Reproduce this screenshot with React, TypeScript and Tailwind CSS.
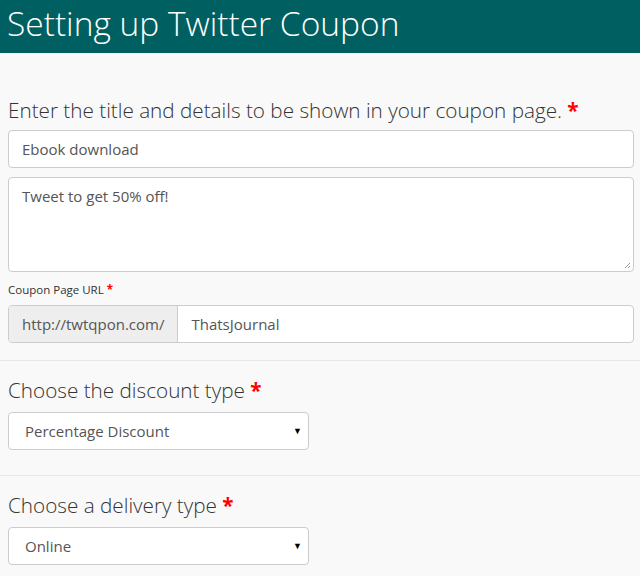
import React from 'react'

const font = { fontFamily: '"Open Sans", "Liberation Sans", sans-serif' }

function Star() {
  return <span className="text-[#ff0000] font-bold">*</span>
}

function FakeSelect({ value }: { value: string }) {
  return (
    <div className="flex h-[38px] w-[301px] items-center justify-between rounded border border-[#cccccc] bg-white pl-[16px] pr-[6px] text-[15px] text-[#555555]">
      <span>{value}</span>
      <span className="text-[9px] text-black">▼</span>
    </div>
  )
}

export default function App() {
  return (
    <div className="min-h-[576px] bg-[#f9f9f9]" style={font}>
      <div className="h-[53px] overflow-hidden bg-[#005f60] px-[7px] pt-[2px]">
        <h1 className="text-[33.5px] font-light leading-[42px] text-white">Setting up Twitter Coupon</h1>
      </div>
      <div className="pl-2 pr-[6px] pt-[42px]">
        <h2 className="text-[20.7px] font-light leading-[30px] text-[#333333]">
          Enter the title and details to be shown in your coupon page. <Star />
        </h2>
        <div className="mt-[5px] flex h-[38px] items-center rounded border border-[#cccccc] bg-white px-[13px] text-[15px] text-[#555555]">
          Ebook download
        </div>
        <div className="relative mt-[9px] h-[95px] rounded border border-[#cccccc] bg-white px-[13px] pt-[7px] text-[15px] text-[#555555]">
          Tweet to get 50% off!
          <svg className="absolute bottom-[2px] right-[2px]" width="7" height="7" viewBox="0 0 7 7">
            <path d="M1 6 L6 1 M4 6 L6 4" stroke="#999" strokeWidth="1" />
          </svg>
        </div>
        <div className="mt-[8px] text-[11.5px] leading-5 text-[#333333]">
          Coupon Page URL <Star />
        </div>
        <div className="mt-[5px] flex h-[38px] rounded border border-[#cccccc] bg-white text-[15px] text-[#555555]">
          <div className="flex items-center rounded-l border-r border-[#cccccc] bg-[#eeeeee] px-[13px]">http://twtqpon.com/</div>
          <div className="flex items-center px-[13px]">ThatsJournal</div>
        </div>
        <div className="-ml-2 -mr-[6px] mt-[17px] border-t border-[#e7e7e7]" />
        <h2 className="mt-[14px] text-[20.7px] font-light leading-[30px] text-[#333333]">
          Choose the discount type <Star />
        </h2>
        <div className="mt-[7px]">
          <FakeSelect value="Percentage Discount" />
        </div>
        <div className="-ml-2 -mr-[6px] mt-[25px] border-t border-[#e7e7e7]" />
        <h2 className="mt-[14px] text-[20.7px] font-light leading-[30px] text-[#333333]">
          Choose a delivery type <Star />
        </h2>
        <div className="mt-[7px]">
          <FakeSelect value="Online" />
        </div>
      </div>
    </div>
  )
}
